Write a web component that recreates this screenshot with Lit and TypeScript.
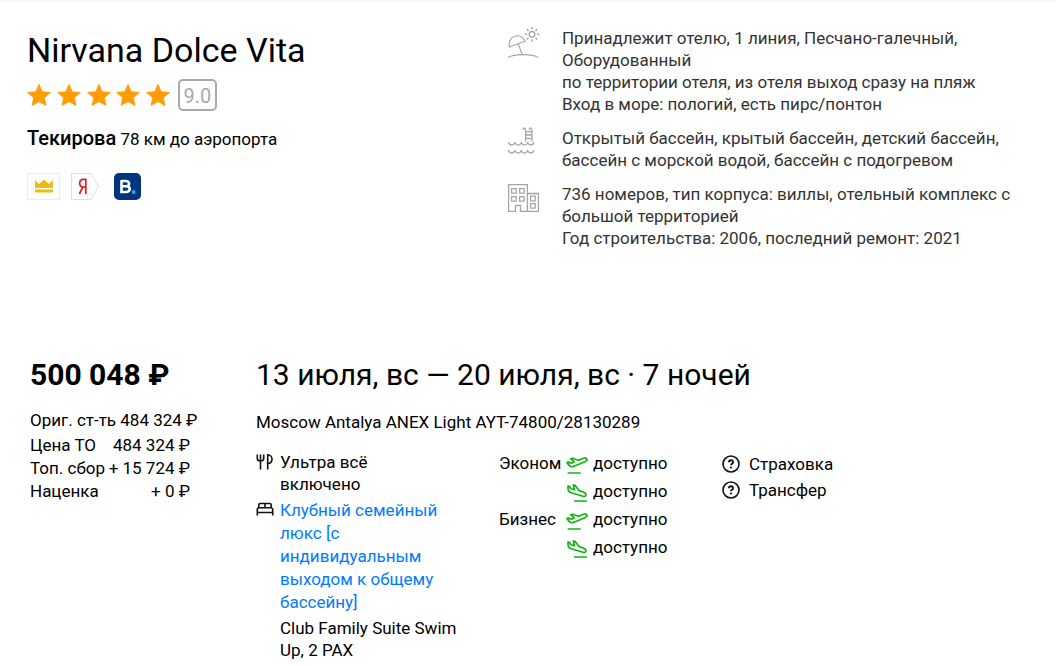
import { LitElement, html, css, svg } from "lit";
import { customElement } from "lit/decorators.js";

const star = html`<svg class="star" viewBox="0 0 24 24" aria-hidden="true">
  <path fill="#ff9c00" stroke="#ff9c00" stroke-width="0.8" stroke-linejoin="round"
    d="M12 1.4 15.2 8.7 23.4 9.4 17.3 14.8 19 22.6 12 18.6 5 22.6 6.700 14.8 .6 9.4 8.8 8.7Z"/>
</svg>`;

const beachIcon = svg`
  <g fill="none" stroke="#a5a5a5" stroke-width="1.1" stroke-linecap="round" stroke-linejoin="round">
    <path d="M1.5 20C.2 15.5 2.2 10.8 6.5 9.2 10.8 7.7 15.4 9.8 17.2 14.2L12.500 15.8C9 17 5.3 18.2 1.5 20Z"/>
    <path d="M10.3 17 14 27.200M0.5 30.4C3 28.4 8 27.6 15 27.6 22 27.6 27.5 28.4 30 30.4"/>
    <circle cx="24" cy="7.3" r="2.8" stroke-width="1.4"/>
    <path stroke-width="1.5" d="M24 .7V1.800M24 12.8V13.900M17.4 7.3H18.500M29.5 7.3H30.600M19.3 2.6 20.1 3.400M27.9 11.2 28.7 12M28.7 2.6 27.9 3.400M20.1 11.2 19.3 12"/>
  </g>`;

const poolIcon = svg`
  <g fill="none" stroke="#a5a5a5" stroke-width="1.300" stroke-linecap="round">
    <path d="M17.6 14V3.5C17.6 .5 15.5 .3 15.3 2.400M23.9 14V3.5C23.9 .5 21.6 .3 21.4 2.400M17.6 4.6H23.900M17.6 8H23.900M17.6 11.4H23.9"/>
    <path d="M.5 15.5C1.5 18.8 5.5 18.8 6.9 15.8 8.3 18.8 12 18.8 13.3 15.8 14.7 18.8 18.3 18.8 19.7 15.8 21.2 18.8 24.8 18.8 25.9 15.5"/>
    <path d="M.5 23.5C1.5 26.8 5.5 26.8 6.9 23.8 8.3 26.8 12 26.8 13.3 23.8 14.7 26.8 18.3 26.8 19.7 23.8 21.2 26.8 24.8 26.8 25.9 23.5"/>
  </g>`;

const buildingIcon = svg`
  <g fill="none" stroke="#a5a5a5" stroke-width="1.300">
    <path d="M.6 28.4V1.6H19.4V28.4H12.5V22.5H7.5V28.4ZM19.4 10.5H30.4V28.4H19.4"/>
    <path d="M3.6 5.6H8.2V10.2H3.6ZM11.6 5.6H16.2V10.2H11.6ZM3.6 13.6H8.2V18.2H3.6ZM11.6 13.6H16.2V18.2H11.6ZM22.6 13.2H27.2V17.8H22.6ZM22.6 20.6H27.2V25.2H22.6Z"/>
  </g>`;

const takeoff = html`<svg class="plane" viewBox="0 0 22 20" aria-hidden="true">
  <g fill="none" stroke="#12b312" stroke-width="1.700" stroke-linejoin="round" stroke-linecap="round">
    <path d="M1 7.6 2.3 6.9 5 8.2 8.2 6.9 4.8 3.9 6.500 3.2 12.4 5.3 17.4 3.3C19 2.700 20.6 3.1 21 4.2 21.3 5.4 20.3 6.200 19 6.700L8 11.2C6 12 4.6 11.9 3.4 10.6Z"/>
    <path d="M2.3 18H14"/>
  </g></svg>`;

const landing = html`<svg class="plane" viewBox="0 0 22 20" aria-hidden="true">
  <g fill="none" stroke="#12b312" stroke-width="1.700" stroke-linejoin="round" stroke-linecap="round">
    <path d="M2 3.2 3.4 3.4 5.2 6 8.4 6.7 7.4 2 9.2 2.4 13 7.600 17.8 9.2C19.3 9.8 20.2 11 19.9 12.2 19.5 13.5 18.2 13.5 17 13.2L5.4 9.8C3.2 9.1 2.2 8 2.1 6.2Z"/>
    <path d="M8.6 18H20.3"/>
  </g></svg>`;

const question = html`<svg class="question" viewBox="0 0 18 18" aria-hidden="true">
  <circle cx="9" cy="9" r="8" fill="none" stroke="#111" stroke-width="1.6"/>
  <path d="M6.9 7.3C6.9 4.6 11.1 4.6 11.1 7.2 11.1 8.7 9 8.7 9 10.3" fill="none" stroke="#111" stroke-width="1.8"/>
  <circle cx="9" cy="12.5" r="1.1" fill="#111"/>
</svg>`;

const facts = [
  {
    icon: beachIcon,
    lines: [
      "Принадлежит отелю, 1 линия, Песчано-галечный, Оборудованный",
      "по территории отеля, из отеля выход сразу на пляж",
      "Вход в море: пологий, есть пирс/понтон",
    ],
  },
  {
    icon: poolIcon,
    lines: ["Открытый бассейн, крытый бассейн, детский бассейн, бассейн с морской водой, бассейн с подогревом"],
  },
  {
    icon: buildingIcon,
    lines: [
      "736 номеров, тип корпуса: виллы, отельный комплекс с большой территорией",
      "Год строительства: 2006, последний ремонт: 2021",
    ],
  },
];

const priceRows = [
  ["Цена ТО", "484 324 ₽"],
  ["Топ. сбор", "+ 15 724 ₽"],
  ["Наценка", "+ 0 ₽"],
];

const base = css`
  * { box-sizing: border-box; }
  h1, h2, p, ul { margin: 0; padding: 0; font-weight: 400; }
  ul { list-style: none; }
  svg { display: block; flex: none; }
  table { border-collapse: collapse; }
  th, td { padding: 0; font-weight: 400; text-align: left; }
`;

@customElement("hotel-summary")
export class HotelSummary extends LitElement {
  static styles = [base, css`
    :host { display: grid; grid-template-columns: 48fr 52fr; padding: 27px 27px 0; }
    .name { font-size: 34px; line-height: 46px; }
    .rating { display: flex; align-items: center; margin-top: 6px; }
    .stars { display: flex; justify-content: space-between; width: 143px; margin-right: 8px; }
    .star { width: 24px; height: 24px; }
    .score { border: 2px solid #a9a9a9; border-radius: 5px; width: 39px; height: 32px;
      line-height: 30px; font-size: 20px; text-align: center; color: #a9a9a9; }
    .place { margin-top: 15px; font-size: 17px; line-height: 24px; }
    .city { font-size: 20px; font-weight: 500; }
    .marks { display: flex; align-items: center; margin-top: 22px; }
    .mark { display: block; }
    .mark + .mark { margin-left: 11px; }
    .mark.booking { margin-left: 15px; }
    .facts { display: grid; gap: 12px; align-content: start; }
    .fact { display: flex; gap: 22px; color: #333; font-size: 17px; line-height: 22px; }
    .fact-icon { width: 32px; height: 32px; }
    .fact-text { max-width: 460px; }
  `];

  render() {
    return html`
      <section>
        <h1 class="name">Nirvana Dolce Vita</h1>
        <div class="rating">
          <div class="stars" role="img" aria-label="5">${[1, 2, 3, 4, 5].map(() => star)}</div>
          <span class="score">9.0</span>
        </div>
        <p class="place"><span class="city">Текирова</span> 78 км до аэропорта</p>
        <div class="marks">
          <a class="mark" href="#"><svg width="33" height="27" viewBox="0 0 33 27">
            <rect x=".5" y=".5" width="32" height="26" fill="#fff" stroke="#ececec"/>
            <path fill="#e9bd12" d="M8 7 12 11 17 6.5 22 11 26 7V15H8ZM8 16.5H26V19.5H8Z"/>
          </svg></a>
          <a class="mark" href="#"><svg width="28" height="27" viewBox="0 0 28 27">
            <path d="M.5.5H20L27.5 13.5 20 26.5H.5Z" fill="#fff" stroke="#dedede"/>
            <path d="M14.8 21V6.4H12.4C9.5 6.4 8.7 8.2 8.7 10.3 8.7 12.7 9.9 14.2 12.4 14.2H14.800M11.8 14.2 8.4 21" fill="none" stroke="#e31b1b" stroke-width="1.7"/>
          </svg></a>
          <a class="mark booking" href="#"><svg width="27" height="27" viewBox="0 0 27 27">
            <rect width="27" height="27" rx="5" fill="#003580"/>
            <path d="M7.5 8H11.5C16.2 8 16 13.2 12.5 13.2H7.500M12 13.2C17 13.2 17 19 12 19H7.5V7" fill="none" stroke="#fff" stroke-width="2.6"/>
            <circle cx="19.6" cy="19" r="2" fill="#18b4e8"/>
          </svg></a>
        </div>
      </section>
      <ul class="facts">
        ${facts.map((f) => html`<li class="fact">
          <svg class="fact-icon" viewBox="0 0 32 32" aria-hidden="true">${f.icon}</svg>
          <div class="fact-text">${f.lines.map((l) => html`<p>${l}</p>`)}</div>
        </li>`)}
      </ul>`;
  }
}

@customElement("tour-offer")
export class TourOffer extends LitElement {
  static styles = [base, css`
    :host { display: grid; grid-template-columns: 226px 1fr; padding: 0 27px 0 30px;
      font-size: 17px; line-height: 22px; }
    .total { font-size: 30px; line-height: 40px; font-weight: 700; }
    .original { margin-top: 14px; line-height: 22px; }
    .breakdown { margin-top: 3px; width: 160px; line-height: 23px; white-space: nowrap; }
    .amount { text-align: right; }
    .dates { font-size: 30px; line-height: 40px; }
    .tour { margin-top: 16px; }
    .details { display: grid; grid-template-columns: 243px 223px 1fr; align-items: start; margin-top: 18px; }
    .stay { display: grid; gap: 4px; }
    .item { display: flex; gap: 6px; }
    .glyph { width: 18px; height: 18px; margin-top: 2px; }
    .meal { max-width: 140px; }
    .room { max-width: 190px; }
    .room-link { display: block; color: #007bff; line-height: 23px; text-decoration: none; margin-bottom: 3px; }
    .seats { line-height: 28px; margin-top: -2px; justify-self: start; }
    .cabin { width: 67px; }
    .seat { display: flex; align-items: center; gap: 5px; }
    .plane { width: 22px; height: 20px; margin-top: 4px; }
    .extras { line-height: 26px; }
    .extra { display: flex; align-items: center; gap: 9px; }
    .question { width: 18px; height: 18px; }
  `];

  private seat(icon: unknown) {
    return html`<td><span class="seat">${icon}доступно</span></td>`;
  }

  render() {
    return html`
      <section>
        <p class="total">500 048 ₽</p>
        <p class="original">Ориг. ст-ть 484 324 ₽</p>
        <table class="breakdown">
          ${priceRows.map(([k, v]) => html`<tr><th scope="row">${k}</th><td class="amount">${v}</td></tr>`)}
        </table>
      </section>
      <section>
        <h2 class="dates">13 июля, вс — 20 июля, вс · 7 ночей</h2>
        <p class="tour">Moscow Antalya ANEX Light AYT-74800/28130289</p>
        <div class="details">
          <div class="stay">
            <div class="item">
              <svg class="glyph" viewBox="0 0 18 18" aria-hidden="true">
                <path d="M1.300 1.500V5.500C1.300 7.200 2.400 8 4.500 8 6.600 8 7.700 7.200 7.700 5.500V1.500M4.500 1.500V16.500M11.700 16.500V1.800C14.500 1.800 16 4 16 6.200 16 8.700 14.800 10.400 11.700 10.400" fill="none" stroke="#111" stroke-width="1.600"/>
              </svg>
              <p class="meal">Ультра всё включено</p>
            </div>
            <div class="item">
              <svg class="glyph" viewBox="0 0 18 18" aria-hidden="true">
                <path d="M1.300 14.500V8.500C1.300 7.400 1.800 6.800 2.800 6.800H15.200C16.200 6.800 16.700 7.400 16.700 8.500V14.500M1.300 11.500H16.700M2.800 6.800V4C2.800 3 3.300 2.500 4.300 2.500H13.700C14.700 2.500 15.200 3 15.200 4V6.800M9 2.500V6.800" fill="none" stroke="#111" stroke-width="1.600"/>
              </svg>
              <div class="room">
                <a class="room-link" href="#">Клубный семейный люкс [с индивидуальным выходом к общему бассейну]</a>
                <p>Club Family Suite Swim Up, 2 PAX</p>
              </div>
            </div>
          </div>
          <table class="seats">
            <tr><th class="cabin" scope="row">Эконом</th>${this.seat(takeoff)}</tr>
            <tr><th></th>${this.seat(landing)}</tr>
            <tr><th class="cabin" scope="row">Бизнес</th>${this.seat(takeoff)}</tr>
            <tr><th></th>${this.seat(landing)}</tr>
          </table>
          <ul class="extras">
            <li class="extra">${question}Страховка</li>
            <li class="extra">${question}Трансфер</li>
          </ul>
        </div>
      </section>`;
  }
}

@customElement("app-root")
export class AppRoot extends LitElement {
  static styles = css`
    :host { display: block; background: #fff; color: #000; font-family: Roboto, "Liberation Sans", sans-serif; }
    .edge { height: 3px; margin-bottom: -3px; background: linear-gradient(#f4f4f4, #fff); }
    .page { display: grid; gap: 106px; }
  `;

  render() {
    return html`
      <div class="edge"></div>
      <main class="page">
        <hotel-summary></hotel-summary>
        <tour-offer></tour-offer>
      </main>`;
  }
}
